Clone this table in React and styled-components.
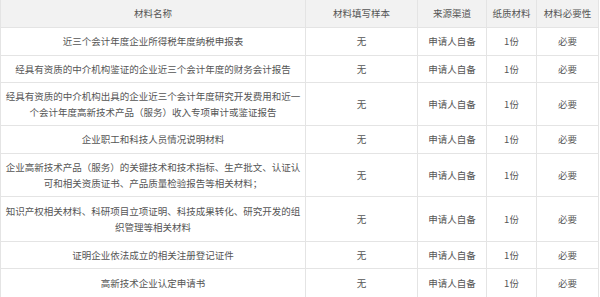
import React from 'react';
import styled, { createGlobalStyle } from 'styled-components';

const GlobalStyle = createGlobalStyle`
  html, body {
    margin: 0;
    padding: 0;
    background: #fff;
  }
`;

const Table = styled.table`
  width: 598px;
  border-collapse: collapse;
  table-layout: fixed;
  font-family: 'Noto Sans CJK SC', 'Noto Sans', sans-serif;
  font-size: 9.5px;
  line-height: 16px;
  color: #555;
`;

const Row = styled.tr`
  height: ${props => props.$h}px;
`;

const HeadCell = styled.th`
  font-weight: normal;
  background: #f2f2f2;
  border: 1px solid #e4e4e4;
  border-top: none;
  text-align: center;
  padding: 0 3px;
`;

const Cell = styled.td`
  border: 1px solid #e4e4e4;
  text-align: center;
  vertical-align: middle;
  padding: 0 3px;
`;

const columns = [
  { title: '材料名称', width: 305 },
  { title: '材料填写样本', width: 112 },
  { title: '来源渠道', width: 69 },
  { title: '纸质材料', width: 50 },
  { title: '材料必要性', width: 62 },
];

const rows = [
  { name: '近三个会计年度企业所得税年度纳税申报表', h: 28 },
  { name: '经具有资质的中介机构鉴证的企业近三个会计年度的财务会计报告', h: 27 },
  { name: '经具有资质的中介机构出具的企业近三个会计年度研究开发费用和近一个会计年度高新技术产品（服务）收入专项审计或鉴证报告', h: 43 },
  { name: '企业职工和科技人员情况说明材料', h: 28 },
  { name: '企业高新技术产品（服务）的关键技术和技术指标、生产批文、认证认可和相关资质证书、产品质量检验报告等相关材料；', h: 43 },
  { name: '知识产权相关材料、科研项目立项证明、科技成果转化、研究开发的组织管理等相关材料', h: 45 },
  { name: '证明企业依法成立的相关注册登记证件', h: 27 },
  { name: '高新技术企业认定申请书', h: 29 },
];

const App = () => {
  return (
    <>
      <GlobalStyle />
      <Table>
        <colgroup>
          {columns.map(c => (
            <col key={c.title} style={{ width: c.width }} />
          ))}
        </colgroup>
        <thead>
          <Row $h={27}>
            {columns.map(c => (
              <HeadCell key={c.title}>{c.title}</HeadCell>
            ))}
          </Row>
        </thead>
        <tbody>
          {rows.map(r => (
            <Row key={r.name} $h={r.h}>
              <Cell>{r.name}</Cell>
              <Cell>无</Cell>
              <Cell>申请人自备</Cell>
              <Cell>1份</Cell>
              <Cell>必要</Cell>
            </Row>
          ))}
        </tbody>
      </Table>
    </>
  );
};

export default App;
